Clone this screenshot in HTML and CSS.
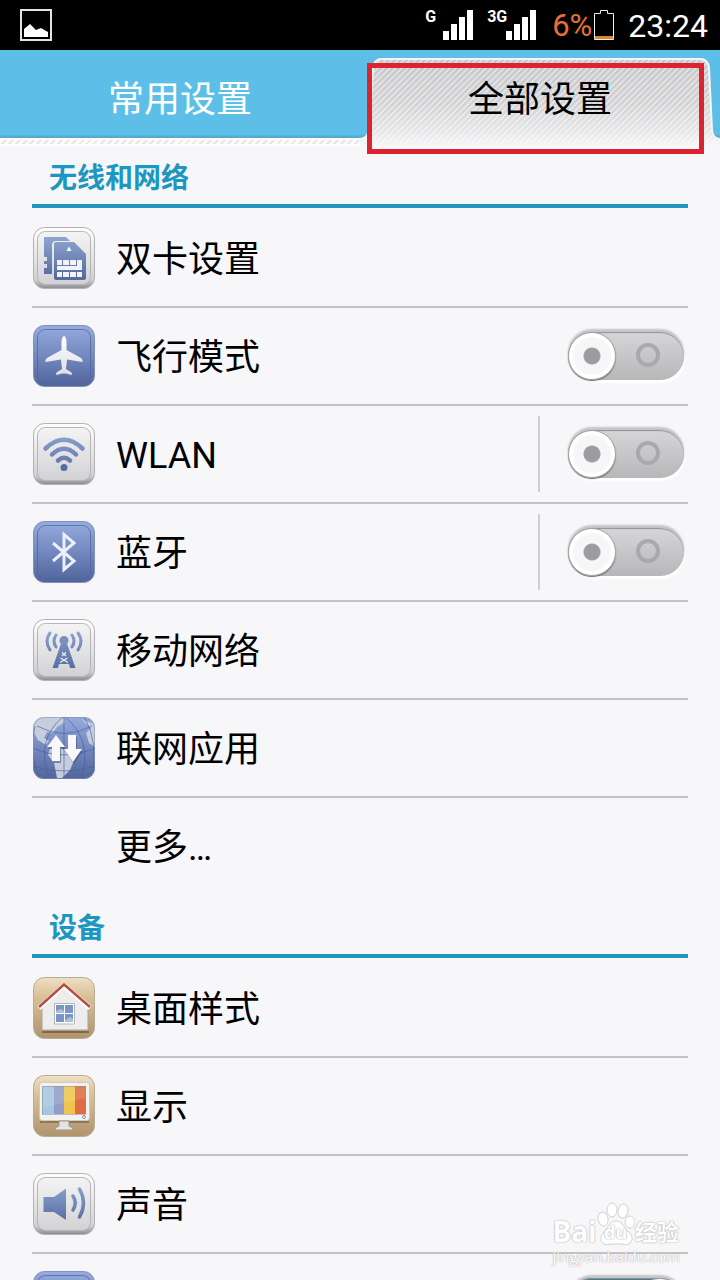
FILE: index.html
```html
<!DOCTYPE html>
<html lang="zh-CN">
<head>
<meta charset="utf-8">
<meta name="viewport" content="width=device-width, initial-scale=1">
<title>设置</title>
<link rel="stylesheet" href="styles.css">
</head>
<body>
<svg class="defs" aria-hidden="true">
  <defs>
    <linearGradient id="silver" x1="0" y1="0" x2="0" y2="1"><stop offset="0" stop-color="#fdfdfd"/><stop offset=".85" stop-color="#d2d2d4"/><stop offset="1" stop-color="#8c8c90"/></linearGradient>
    <linearGradient id="silverIn" x1="0" y1="0" x2="0" y2="1"><stop offset="0" stop-color="#f4f4f4"/><stop offset="1" stop-color="#d2d2d5"/></linearGradient>
    <linearGradient id="blue" x1="0" y1="0" x2="0" y2="1"><stop offset="0" stop-color="#96ace0"/><stop offset=".5" stop-color="#7288be"/><stop offset="1" stop-color="#50649a"/></linearGradient>
    <linearGradient id="ink" x1="0" y1="0" x2="0" y2="64" gradientUnits="userSpaceOnUse"><stop offset=".2" stop-color="#8ca3d0"/><stop offset=".8" stop-color="#566b9f"/></linearGradient>
    <linearGradient id="tan" x1="0" y1="0" x2="0" y2="1"><stop offset="0" stop-color="#f0dfc3"/><stop offset=".3" stop-color="#d9c29b"/><stop offset="1" stop-color="#af946b"/></linearGradient>
    <linearGradient id="white" x1="0" y1="0" x2="0" y2="1"><stop offset="0" stop-color="#fff"/><stop offset="1" stop-color="#dcdfe8"/></linearGradient>
    <linearGradient id="tabFill" x1="0" y1="0" x2="0" y2="1"><stop offset="0" stop-color="#c4c3c5"/><stop offset=".5" stop-color="#d0cfd1"/><stop offset=".85" stop-color="#e6e5e7"/><stop offset="1" stop-color="#f7f6f9"/></linearGradient>
    <pattern id="twill" width="6" height="6" patternUnits="userSpaceOnUse"><path d="M-1 1 1-1M-1 7 7-1M5 7 7 5" stroke="#fff" stroke-opacity=".45" stroke-width="2"/></pattern>
    <clipPath id="tile"><rect x="1" y="1" width="62" height="62" rx="11"/></clipPath>
    <symbol id="silverTile" viewBox="0 0 64 64"><rect x="1.500" y="1.500" width="61" height="61" rx="11" fill="url(#silver)" stroke="#b2b2b5"/><rect x="5.500" y="5.500" width="53" height="53" rx="8" fill="url(#silverIn)" stroke="#b5b5b9"/></symbol>
    <symbol id="blueTile" viewBox="0 0 64 64"><rect x="1.500" y="1.500" width="61" height="61" rx="11" fill="url(#blue)" stroke="#8290b8"/><rect x="5.500" y="5.500" width="53" height="53" rx="8" fill="none" stroke="#4f649f" stroke-opacity=".75"/></symbol>
    <symbol id="tanTile" viewBox="0 0 64 64"><rect x="1.500" y="1.500" width="61" height="61" rx="11" fill="url(#tan)" stroke="#b6aa98"/></symbol>
  </defs>
</svg>

<header class="status">
  <svg class="status-photo" viewBox="0 0 32 32" role="img" aria-label="图片"><rect x="1" y="1" width="30" height="30" fill="none" stroke="#e4e4e4" stroke-width="2"/><path d="M4 28V20L10 15 16 21 21 19 28 23V28Z" fill="#fff"/></svg>
  <div class="status-right">
    <span class="net">G</span>
    <svg class="bars" viewBox="0 0 30 30" aria-hidden="true"><path d="M0 21h6v9H0zM8 14h6v16H8zM16 7h6v23h-6zM24 0h6v30h-6z" fill="#fff"/></svg>
    <span class="net net-3g">3G</span>
    <svg class="bars" viewBox="0 0 30 30" aria-hidden="true"><path d="M0 21h6v9H0zM8 14h6v16H8zM16 7h6v23h-6zM24 0h6v30h-6z" fill="#fff"/></svg>
    <span class="percent">6%</span>
    <svg class="battery" viewBox="0 0 20 30" aria-hidden="true"><path d="M.5 29.500V3.500H6.500V.5H13.500V3.500H19.500V29.500Z" fill="none" stroke="#eee"/><path d="M1 26h18v3H1z" fill="#d68a2c"/></svg>
    <time class="clock">23:24</time>
  </div>
</header>

<nav class="tabs">
  <button class="tab" type="button">常用设置</button>
  <button class="tab tab-active" type="button">
    <svg class="tab-shape" viewBox="0 0 360 96" preserveAspectRatio="none" aria-hidden="true">
      <path d="M0 88C5 88 8 85 9 80L13 18Q14 8 22 8H340Q348 8 349 18L352 80Q353 88 360 88V96H0Z" fill="url(#tabFill)"/>
      <path d="M0 88C5 88 8 85 9 80L13 18Q14 8 22 8H340Q348 8 349 18L352 80Q353 88 360 88V93H0Z" fill="url(#twill)"/>
      <path d="M0 89C5 89 8 85 9 80L13 18Q14 9 22 9H340Q348 9 349 18L352 80Q353 89 360 89" fill="none" stroke="#f5f5f6" stroke-width="2"/>
    </svg>
    <span class="tab-text">全部设置</span>
  </button>
  <span class="highlight" aria-hidden="true"></span>
</nav>

<main class="settings">
  <section>
    <h2 class="heading">无线和网络</h2>
    <ul class="list">
      <li class="row">
        <svg class="icon" viewBox="0 0 64 64" aria-hidden="true"><use href="#silverTile"/>
          <path d="M12 11H34L38 15H24Q20 15 20 19V48H12V42H15V38H12V35H15V31H12Z" fill="url(#ink)"/>
          <path d="M22 18Q22 16 24 16H42L54 28V52Q54 54 52 54H24Q22 54 22 52Z" fill="url(#ink)"/>
          <path d="M34.500 25 37 20.500 39.500 25Z" fill="#fff"/>
          <path d="M25 34H30V39H25ZM31 34H37V39H31ZM38 34H44V39H38ZM45 34H50V44H25V40H45ZM25 46H30V51H25ZM31 46H37V51H31ZM38 46H44V51H38ZM45 46H50V51H45Z" fill="#f2f3f8"/></svg>
        <a class="name" href="#">双卡设置</a>
      </li>
      <li class="row">
        <svg class="icon" viewBox="0 0 64 64" aria-hidden="true"><use href="#blueTile"/><path d="M32 12Q34.500 13 34.500 19V26L49 34Q51 35.500 50.500 38L35 35.500 34 45 39.500 48.500Q40.500 50 39.500 51L34 49.500H30L24.500 51Q23.500 50 24.500 48.500L30 45 29 35.500 13.500 38Q13 35.500 15 34L29.500 26V19Q29.500 13 32 12Z" fill="url(#white)"/></svg>
        <label class="name" for="airplane">飞行模式</label>
        <input class="switch" id="airplane" type="checkbox">
      </li>
      <li class="row">
        <svg class="icon" viewBox="0 0 64 64" aria-hidden="true"><use href="#silverTile"/><g fill="none" stroke="url(#ink)" stroke-width="4.500" stroke-linecap="round"><path d="M13.500 26.500Q32 9 50.500 26.500M20 32.500Q32 21 44 32.500M26 38.500Q32 33 38 38.500"/></g><circle cx="32" cy="45.500" r="3.500" fill="#566b9f"/></svg>
        <label class="name" for="wlan">WLAN</label>
        <span class="divider"></span>
        <input class="switch" id="wlan" type="checkbox">
      </li>
      <li class="row">
        <svg class="icon" viewBox="0 0 64 64" aria-hidden="true"><use href="#blueTile"/><path d="M21 23 42 41 32 49.500V14.500L42 23 21 41" fill="none" stroke="#eceff8" stroke-width="3"/></svg>
        <label class="name" for="bluetooth">蓝牙</label>
        <span class="divider"></span>
        <input class="switch" id="bluetooth" type="checkbox">
      </li>
      <li class="row">
        <svg class="icon" viewBox="0 0 64 64" aria-hidden="true"><use href="#silverTile"/><circle cx="32" cy="22.500" r="4.500" fill="#7d90bd"/><path d="M29.500 24H34.500L43.500 50H38L37 46H27L26 50H20.500Z" fill="url(#ink)"/><path d="M30 38 34 34.500M34 38 30 34.500M28 44.500 35.500 40M36 44.500 28.500 40" stroke="#edeef3" stroke-width="1.300"/><path d="M18 15Q12 23 18 32M24 17Q20 23 24 29M46 15Q52 23 46 32M40 17Q44 23 40 29" fill="none" stroke="url(#ink)" stroke-width="3" stroke-linecap="round"/></svg>
        <a class="name" href="#">移动网络</a>
      </li>
      <li class="row">
        <svg class="icon" viewBox="0 0 64 64" aria-hidden="true"><g clip-path="url(#tile)"><rect width="64" height="64" fill="url(#blue)"/>
          <path d="M0 0H30L33 6 25 11 21 17 15 16 12 22 17 25 14 29 6 24 0 13ZM18 32 26 30 35 36 43 42 38 54 30 62H25L22 47 16 39ZM50 4 63 8V31L57 27 54 17 59 12Z" fill="#c6cddd"/>
          <path d="M32 0V64M32 0Q2 24 18 64M32 0Q62 24 49 64M3 10Q-4 34 7 64M52 0Q68 28 59 64M5 10Q32 25 60 10M0 32Q32 46 64 32M0 50Q32 60 64 50" fill="none" stroke="#46609b" stroke-opacity=".65"/></g>
          <path d="M24 19 33 31H28V45H20V31H15ZM36 19H44V33H50L41 46 32 33H36Z" fill="#465578" opacity=".6" transform="translate(1 2)"/>
          <path d="M24 19 33 31H28V45H20V31H15ZM36 19H44V33H50L41 46 32 33H36Z" fill="#f8f8fa"/><rect x="1.500" y="1.500" width="61" height="61" rx="11" fill="none" stroke="#8592b2" stroke-opacity=".6"/></svg>
        <a class="name" href="#">联网应用</a>
      </li>
      <li class="row row-last">
        <span class="icon"></span>
        <a class="name" href="#">更多…</a>
      </li>
    </ul>
  </section>

  <section>
    <h2 class="heading">设备</h2>
    <ul class="list">
      <li class="row">
        <svg class="icon" viewBox="0 0 64 64" aria-hidden="true"><use href="#tanTile"/><path d="M10 56H57" stroke="#80674a" stroke-width="2"/><path d="M10 31 32 11 56 31V54H10Z" fill="#eeedee" stroke="#aaa39a"/><path d="M7 32 32 9.500 58 32" fill="none" stroke="#fff" stroke-width="5"/><path d="M7 31 32 8.500 58 31" fill="none" stroke="#b74e45" stroke-width="2.500"/><path d="M22.500 27.500H42.500V48H22.500Z" fill="#fff" stroke="#b5b5b9"/><path d="M24 29H32V37H24ZM33 29H41V37H33ZM24 38H32V46H24ZM33 38H41V46H33Z" fill="#7897c6"/><path d="M24 35 29 33 32 35V37H24ZM33 44 38 41 41 43V46H33Z" fill="#a9c0df"/></svg>
        <a class="name" href="#">桌面样式</a>
      </li>
      <li class="row">
        <svg class="icon" viewBox="0 0 64 64" aria-hidden="true"><use href="#tanTile"/><path d="M8 48H57" stroke="#8f7856" stroke-width="2"/><rect x="7.500" y="8.500" width="50" height="38" rx="3" fill="#f3f2f3" stroke="#d1c9be"/><path d="M10 12H22V40H10Z" fill="#a5c7e2"/><path d="M22 12H32V40H22Z" fill="#929cc8"/><path d="M32 12H43V40H32Z" fill="#f0c54e"/><path d="M43 12H54V40H43Z" fill="#df6c42"/><path d="M10 12H54V24L10 34Z" fill="#fff" opacity=".12"/><path d="M10.500 12.500H53.500V40.500H10.500Z" fill="none" stroke="#8e8b90" stroke-opacity=".55"/><circle cx="52" cy="43" r="1.500" fill="none" stroke="#98a"/><path d="M27 47H37V52L41 54V56H23V54L27 52Z" fill="#e5e4e6" stroke="#9f937f"/></svg>
        <a class="name" href="#">显示</a>
      </li>
      <li class="row">
        <svg class="icon" viewBox="0 0 64 64" aria-hidden="true"><use href="#silverTile"/><path d="M11.500 25H22L34 16.500V48L22 40H11.500Z" fill="url(#ink)"/><path d="M41 24Q45.500 31 41 38M47.500 17Q55.500 31 47.500 45" fill="none" stroke="url(#ink)" stroke-width="3.500" stroke-linecap="round"/></svg>
        <a class="name" href="#">声音</a>
      </li>
      <li class="row">
        <svg class="icon" viewBox="0 0 64 64" aria-hidden="true"><use href="#blueTile"/></svg>
        <span class="name"></span>
        <input class="switch" type="checkbox" checked aria-label="开关">
      </li>
    </ul>
  </section>
</main>

<aside class="watermark">
  <div class="brand">
    <span class="brand-latin">Bai</span>
    <span class="paw"><svg class="paw-shape" viewBox="0 0 38 44" aria-hidden="true"><g fill="#fff" stroke="#d2d1d4"><ellipse cx="6" cy="17" rx="5" ry="7" transform="rotate(-12 6 17)"/><ellipse cx="15" cy="8" rx="5" ry="7"/><ellipse cx="26" cy="9" rx="5" ry="7" transform="rotate(10 26 9)"/><ellipse cx="33" cy="20" rx="5" ry="6"/><path d="M19 19C26 19 27 27 32 30 40 38 31 45 25 42H14C5 45 1 38 6 31 11 27 12 19 19 19Z"/></g></svg><span class="paw-text">du</span></span>
    <span class="brand-cn">经验</span>
  </div>
  <span class="site">jingyan.baidu.com</span>
</aside>
</body>
</html>
```

FILE: styles.css
```css
*, *::before, *::after { box-sizing: border-box; }

body {
  position: relative;
  height: 100vh;
  margin: 0;
  overflow: hidden;
  background: #f7f6f9;
  color: #000;
  font-family: Roboto, "Noto Sans CJK SC", sans-serif;
}

.defs { position: absolute; width: 0; height: 0; }

.status {
  display: flex;
  justify-content: space-between;
  height: 50px;
  padding: 0 12px 0 20px;
  background: #000;
  color: #fff;
}
.status-photo { width: 32px; height: 32px; margin-top: 9px; }
.status-right { display: flex; padding-top: 10px; }
.net {
  width: 18px;
  font-size: 16px;
  line-height: 14px;
  font-weight: 700;
}
.net-3g { width: 20px; margin-left: 14px; margin-right: -1px; }
.bars { width: 30px; height: 30px; }
.percent {
  margin-left: 16px;
  color: #ea7031;
  font-size: 31px;
  line-height: 32px;
}
.battery { width: 20px; height: 30px; margin-left: 2px; }
.clock { margin-left: 14px; font-size: 32px; line-height: 32px; }

.tabs {
  position: relative;
  display: flex;
  height: 96px;
  background:
    repeating-linear-gradient(135deg, #fbfbfb 0 3px, #e6e5e8 3px 5px) 0 90px / 100% 4px no-repeat,
    linear-gradient(#5dbfe8 0 84px, #4aa5d0 88px, #fdfdfd 88px);
}
.tab {
  position: relative;
  flex: 1;
  padding: 4px 0 0;
  border: 0;
  background: none;
  color: #fff;
  font-family: inherit;
  font-size: 36px;
  line-height: 92px;
}
.tab-active { color: #000; }
.tab-shape { position: absolute; inset: 0; width: 100%; height: 100%; }
.tab-text { position: relative; }
.highlight {
  position: absolute;
  top: 13px;
  right: 16px;
  width: 337px;
  height: 91px;
  border: 5px solid #dc2430;
}

.settings { padding: 0 32px; }
.heading {
  height: 62px;
  margin: 0 0 2px;
  padding: 4px 0 0 17px;
  border-bottom: 4px solid #2296ba;
  color: #1b97c1;
  font-size: 28px;
  font-weight: 700;
  line-height: 58px;
}
.list { margin: 0; padding: 0; list-style: none; }
.row {
  display: flex;
  align-items: center;
  height: 98px;
  border-bottom: 2px solid #c3c2c5;
}
.row-last { border-color: transparent; }
.icon { flex: none; width: 64px; height: 64px; }
.name {
  flex: 1;
  margin-left: 20px;
  padding-top: 4px;
  color: #000;
  font-size: 36px;
  line-height: 48px;
  text-decoration: none;
}
.divider { width: 2px; height: 76px; margin-right: 28px; background: #d0cfd2; }

.switch {
  position: relative;
  flex: none;
  width: 116px;
  height: 48px;
  margin: 0 4px 0 0;
  border-radius: 24px;
  appearance: none;
  background: linear-gradient(#d6d5d7, #b7b6b8);
  box-shadow: 0 -3px 2px #c4c3c6, 1px 3px 2px #fff, inset 0 1px 1px #929194;
}
.switch::before {
  content: "";
  position: absolute;
  top: 0;
  left: 0;
  width: 48px;
  height: 48px;
  border: 1px solid #a4a3a6;
  border-radius: 50%;
  background: radial-gradient(circle closest-side, #9c9b9e 0 7px, #a2a1a4 8px, #f6f6f8 9px, #f6f5f8 18px, #fff 20px);
  box-shadow: 0 1px 1px #66656a;
}
.switch::after {
  content: "";
  position: absolute;
  top: 11px;
  right: 24px;
  width: 24px;
  height: 24px;
  border: 4px solid #a9a8ab;
  border-radius: 50%;
}
.switch:checked { background: linear-gradient(#357c92, #4ba5c0); }
.switch:checked::before { left: auto; right: 0; }
.switch:checked::after { display: none; }

.watermark {
  position: absolute;
  right: 40px;
  bottom: 14px;
  color: #fff;
  font-family: "Open Sans", "Noto Sans CJK SC", sans-serif;
  text-shadow: 0 0 1px #aaa, 0 0 2px #bbb;
}
.brand { display: flex; align-items: flex-end; height: 44px; }
.brand-latin { font-size: 28px; font-weight: 700; line-height: 30px; }
.paw { position: relative; width: 38px; height: 44px; }
.paw-shape { width: 38px; height: 44px; }
.paw-text {
  position: absolute;
  inset: 20px 0 0;
  font-size: 18px;
  font-weight: 700;
  line-height: 20px;
  text-align: center;
}
.brand-cn { font-size: 22px; font-weight: 700; line-height: 30px; }
.site { display: block; font-size: 15px; line-height: 20px; }
```
